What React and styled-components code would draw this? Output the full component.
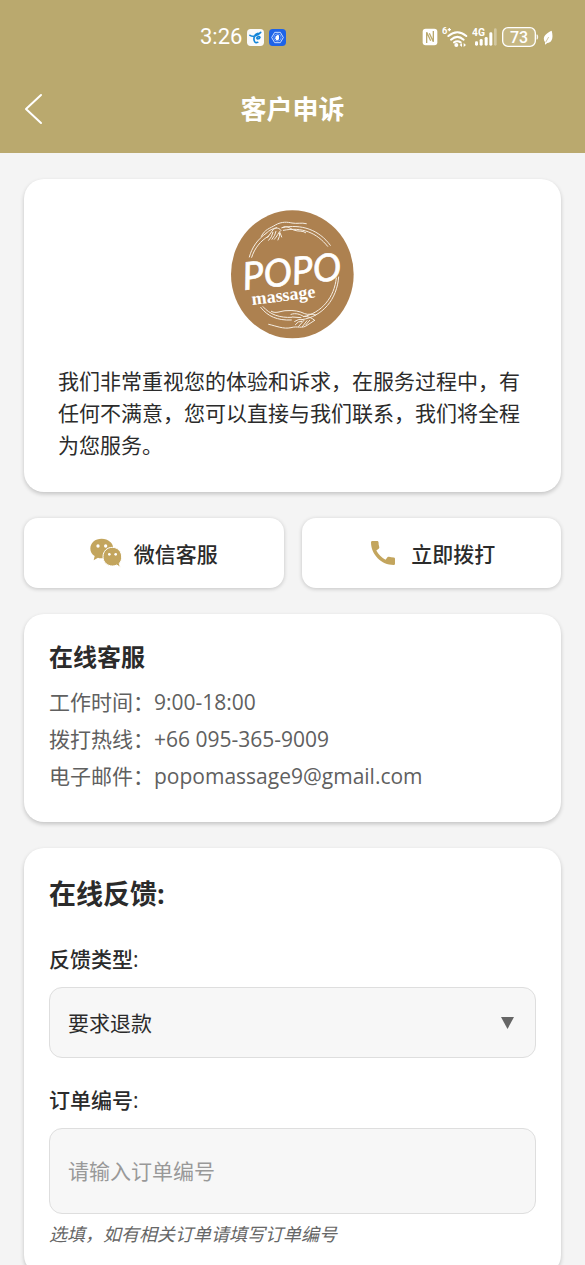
import React, { useState } from "react";
import styled, { createGlobalStyle } from "styled-components";
import { MdCall } from "react-icons/md";

const GlobalStyle = createGlobalStyle`
  *, *::before, *::after { box-sizing: border-box; }
  body {
    margin: 0;
    background: #f4f4f4;
    color: #2b2b2b;
    font-family: "Open Sans", "Noto Sans CJK SC", sans-serif;
    font-size: 21px;
  }
  h1, h2, p, dl, dd { margin: 0; }
  button, input, select { font: inherit; color: inherit; }
`;

const Header = styled.header`
  background: #baa96e;
  color: #fff;
  padding-bottom: 9px;
`;

const StatusBar = styled.div`
  display: flex;
  align-items: center;
  justify-content: space-between;
  height: 74px;
  padding: 0 32px 0 200px;
`;

const StatusGroup = styled.div`
  display: flex;
  align-items: center;
  gap: ${(p) => p.$gap}px;
  svg { display: block; }
`;

const Clock = styled.span`
  font-family: Roboto, sans-serif;
  font-size: 22px;
  line-height: 26px;
`;

const NavBar = styled.div`
  display: grid;
  grid-template-columns: 1fr auto 1fr;
  align-items: center;
  height: 70px;
  padding: 0 24px;
`;

const BackButton = styled.button`
  justify-self: start;
  display: flex;
  padding: 0;
  border: 0;
  background: none;
`;

const PageTitle = styled.h1`
  font-size: 26px;
  line-height: 36px;
  font-weight: 700;
`;

const Main = styled.main`
  display: flex;
  flex-direction: column;
  gap: 26px;
  padding: 26px 24px 0;
`;

const Card = styled.section`
  padding: 27px 25px;
  border-radius: 20px;
  background: #fff;
  box-shadow: 0 2px 4px rgba(0, 0, 0, 0.2);
`;

const IntroCard = styled(Card)`
  display: flex;
  flex-direction: column;
  align-items: center;
  gap: 26px;
  padding: 31px 34px;
`;

const IntroText = styled.p`
  align-self: stretch;
  line-height: 32px;
`;

const Actions = styled.div`
  display: grid;
  grid-template-columns: 1fr 1fr;
  gap: 18px;
`;

const ActionButton = styled.button`
  display: flex;
  align-items: center;
  justify-content: center;
  gap: 12px;
  height: 70px;
  padding: 0;
  border: 0;
  border-radius: 14px;
  background: #fff;
  font-weight: 500;
  box-shadow: 0 1px 4px rgba(0, 0, 0, 0.2);
  svg { color: #c3a55d; }
`;

const ContactTitle = styled.h2`
  margin-bottom: 11px;
  font-size: 24px;
  line-height: 32px;
  font-weight: 700;
`;

const ContactList = styled.dl`
  color: #606060;
  line-height: 37px;
`;

const ContactRow = styled.div`
  display: flex;
  dt { flex: none; }
`;

const FormTitle = styled.h2`
  font-size: 27px;
  line-height: 38px;
  font-weight: 700;
`;

const Field = styled.div`
  display: flex;
  flex-direction: column;
  margin-top: ${(p) => p.$top}px;
`;

const Label = styled.label`
  margin-bottom: 12px;
  line-height: 32px;
  font-weight: 500;
`;

const SelectWrap = styled.div`
  position: relative;
  svg {
    position: absolute;
    right: 22px;
    top: 50%;
    transform: translateY(-50%);
    pointer-events: none;
  }
`;

const Select = styled.select`
  display: block;
  width: 100%;
  height: 71px;
  padding: 0 48px 0 18px;
  appearance: none;
  border: 1px solid #dedede;
  border-radius: 13px;
  background: #f7f7f7;
`;

const TextInput = styled.input`
  width: 100%;
  height: 86px;
  padding: 0 18px;
  border: 1px solid #dedede;
  border-radius: 13px;
  background: #f7f7f7;
  &::placeholder { color: #999; opacity: 1; }
`;

const Hint = styled.p`
  margin-top: 6px;
  color: #666;
  font-size: 18px;
  line-height: 28px;
  font-style: italic;
`;

const CarrierIcon = () => (
  <svg width="17" height="17" viewBox="0 0 51 51" aria-hidden="true">
    <rect width="51" height="51" rx="11" fill="#fafafa" />
    <path d="M9 19C18 25 31 21 41 10M33 13C22 15 18 30 23 38Q26 42 32 40M29 27Q36 20 39 25Q38 30 31 30" fill="none" stroke="#1285d8" strokeWidth="5" strokeLinecap="round" strokeLinejoin="round" />
  </svg>
);

const SafetyIcon = () => (
  <svg width="17" height="17" viewBox="0 0 51 51" aria-hidden="true">
    <rect width="51" height="51" rx="11" fill="#1d63e8" />
    <path d="M17 10H34L43 25.500L34 41H17L8 25.500Z" fill="none" stroke="#c9dcff" strokeWidth="3" />
    <circle cx="25.500" cy="25.500" r="11" fill="none" stroke="#8fb7ff" strokeWidth="2" />
    <path d="M20 25V21H23V17H26V19H30V30L27 34H22L18 27Z" fill="#fff" />
  </svg>
);

const NfcIcon = () => (
  <svg width="16" height="18" viewBox="0 0 48 54" aria-hidden="true">
    <rect x="2" y="2" width="44" height="50" rx="9" fill="#fff" />
    <path d="M14 45V13L26 38M34 9V41L22 16" fill="none" stroke="#baa96e" strokeWidth="4" />
  </svg>
);

const WifiIcon = () => (
  <svg width="26" height="22" viewBox="0 0 78 66" fill="none" stroke="#fff" aria-hidden="true">
    <text x="0" y="25" fill="#fff" stroke="none" fontFamily="Roboto, sans-serif" fontSize="28" fontWeight="700">6</text>
    <path d="M17 11H27M22 6V16" strokeWidth="4" />
    <path d="M19 30Q46 7 73 30M27 41Q46 24 65 41" strokeWidth="6" strokeLinecap="round" />
    <path d="M36 49Q46 42 56 49" strokeWidth="6" strokeLinecap="round" />
    <circle cx="43" cy="57" r="6" fill="#fff" stroke="none" />
    <path d="M60 51L53 57L60 63ZM65 51L72 57L65 63Z" fill="#fff" stroke="none" />
  </svg>
);

const SignalIcon = () => (
  <svg width="26" height="20" viewBox="0 0 78 60" fill="#fff" aria-hidden="true">
    <text x="0" y="27" fontFamily="Roboto, sans-serif" fontSize="31" fontWeight="700">4G</text>
    <rect x="9" y="43" width="9" height="13" rx="4" />
    <rect x="23" y="36" width="9" height="20" rx="4" />
    <rect x="38" y="30" width="9" height="26" rx="4" />
    <rect x="52" y="16" width="9" height="40" rx="4" />
    <rect x="66" y="4" width="8" height="52" rx="4" opacity="0.35" />
  </svg>
);

const BatteryIcon = () => (
  <svg width="37" height="20" viewBox="0 0 111 60" aria-hidden="true">
    <rect x="2" y="2" width="98" height="56" rx="16" fill="#c6b783" stroke="#fff" strokeWidth="4" />
    <text x="51" y="47" textAnchor="middle" fill="#fff" fontFamily="Roboto, sans-serif" fontSize="48" fontWeight="500">73</text>
    <path d="M105 23Q110 30 105 37Z" fill="#fff" stroke="#fff" strokeWidth="2" />
  </svg>
);

const LeafIcon = () => (
  <svg width="10" height="15" viewBox="0 0 30 45" aria-hidden="true">
    <path d="M26 2C31 20 29 38 13 39L6 44L6 37C-3 23 6 11 26 2Z" fill="#fff" />
    <path d="M8 37L17 21" stroke="#baa96e" strokeWidth="2" />
  </svg>
);

const BackIcon = () => (
  <svg width="20" height="34" viewBox="0 0 20 34" fill="none" stroke="#fff" strokeWidth="2" strokeLinecap="round" strokeLinejoin="round" aria-hidden="true">
    <path d="M17 3L2 17L17 31" />
  </svg>
);

const WechatIcon = () => (
  <svg width="32" height="30" viewBox="0 0 96 90" aria-hidden="true">
    <path d="M35 2C15 2 1 14 1 32C1 42 6 49 14 54L11 67L24 59C29 61 34 61 39 61C58 61 70 48 70 32C70 15 55 2 35 2Z" fill="currentColor" />
    <circle cx="24" cy="24" r="5" fill="#fff" />
    <circle cx="47" cy="24" r="5" fill="#fff" />
    <path d="M67 28C51 28 39 40 39 56C39 73 52 84 68 84C73 84 77 83 80 81L91 88L88 76C93 71 95 64 95 57C95 40 83 28 67 28Z" fill="currentColor" stroke="#fff" strokeWidth="3" />
    <circle cx="58" cy="49" r="4" fill="#fff" />
    <circle cx="77" cy="49" r="4" fill="#fff" />
  </svg>
);

const BrandLogo = () => (
  <svg width="123" height="129" viewBox="27 31 369 387" role="img" aria-label="POPO massage">
    <ellipse cx="211" cy="224" rx="184" ry="192" fill="#ad8150" />
    <g fill="none" stroke="#f6eee3" strokeWidth="3" strokeLinecap="round" strokeLinejoin="round">
      <path d="M82 172C90 143 106 120 132 101M89 173C98 145 115 124 140 109" />
      <path d="M180 84C238 72 291 90 325 137M184 92C240 81 284 99 317 140" />
      <path d="M118 110C129 88 143 87 160 76C180 65 196 67 210 70C225 73 238 68 253 72" />
      <path d="M132 101C143 91 151 87 164 84M137 113L152 92M140 122Q150 113 153 98M150 119Q160 107 162 95" />
      <path d="M157 119C166 110 169 98 177 92C169 82 158 84 151 92M168 121Q174 111 173 100M179 112L174 99" />
      <path d="M180 84C196 75 201 86 215 91C230 97 240 91 251 99" />
      <path d="M350 232C345 299 302 351 239 360M343 235C337 293 299 340 244 351" />
      <path d="M116 323C137 350 166 363 208 361M123 321C144 345 173 355 209 353" />
      <path d="M148 335C163 344 179 332 195 333C215 331 234 335 248 342C259 347 271 340 281 346" />
      <path d="M140 374C163 379 184 389 207 384C225 378 241 388 255 377L278 362" />
      <path d="M207 344C222 339 234 344 244 350C259 350 271 355 278 362M211 352L237 354M218 365Q230 356 243 360M220 375Q228 363 239 365M230 380L246 362M241 381L255 363M251 376L263 362" />
    </g>
    <g fill="#fff">
      <text x="65" y="271" transform="rotate(-6 65 271)" fontFamily="Lato, sans-serif" fontSize="114" fontStyle="italic" stroke="#fff" strokeWidth="2">POPO</text>
      <text x="91" y="316" transform="rotate(-7 91 316)" fontFamily="'Liberation Serif', serif" fontSize="54" fontWeight="700">massage</text>
    </g>
  </svg>
);

const contacts = [
  { label: "工作时间：", value: "9:00-18:00" },
  { label: "拨打热线：", value: "+66 095-365-9009" },
  { label: "电子邮件：", value: "popomassage9@gmail.com" },
];

export default function App() {
  const [orderNumber, setOrderNumber] = useState("");

  return (
    <>
      <GlobalStyle />
      <Header>
        <StatusBar>
          <StatusGroup $gap={5}>
            <Clock>3:26</Clock>
            <CarrierIcon />
            <SafetyIcon />
          </StatusGroup>
          <StatusGroup $gap={4}>
            <NfcIcon />
            <WifiIcon />
            <SignalIcon />
            <BatteryIcon />
            <LeafIcon />
          </StatusGroup>
        </StatusBar>
        <NavBar>
          <BackButton type="button" aria-label="返回">
            <BackIcon />
          </BackButton>
          <PageTitle>客户申诉</PageTitle>
        </NavBar>
      </Header>
      <Main>
        <IntroCard>
          <BrandLogo />
          <IntroText>
            我们非常重视您的体验和诉求，在服务过程中，有任何不满意，您可以直接与我们联系，我们将全程为您服务。
          </IntroText>
        </IntroCard>
        <Actions>
          <ActionButton type="button">
            <WechatIcon />
            微信客服
          </ActionButton>
          <ActionButton type="button">
            <MdCall size={32} aria-hidden="true" />
            立即拨打
          </ActionButton>
        </Actions>
        <Card>
          <ContactTitle>在线客服</ContactTitle>
          <ContactList>
            {contacts.map((c) => (
              <ContactRow key={c.label}>
                <dt>{c.label}</dt>
                <dd>{c.value}</dd>
              </ContactRow>
            ))}
          </ContactList>
        </Card>
        <Card as="form">
          <FormTitle>在线反馈:</FormTitle>
          <Field $top={30}>
            <Label htmlFor="feedback-type">反馈类型:</Label>
            <SelectWrap>
              <Select id="feedback-type" defaultValue="refund">
                <option value="refund">要求退款</option>
              </Select>
              <svg width="13" height="12" viewBox="0 0 13 12" aria-hidden="true">
                <path d="M0 0H13L6.500 12Z" fill="#666" />
              </svg>
            </SelectWrap>
          </Field>
          <Field $top={26}>
            <Label htmlFor="order-number">订单编号:</Label>
            <TextInput
              id="order-number"
              placeholder="请输入订单编号"
              value={orderNumber}
              onChange={(e) => setOrderNumber(e.target.value)}
            />
            <Hint>选填，如有相关订单请填写订单编号</Hint>
          </Field>
        </Card>
      </Main>
    </>
  );
}
